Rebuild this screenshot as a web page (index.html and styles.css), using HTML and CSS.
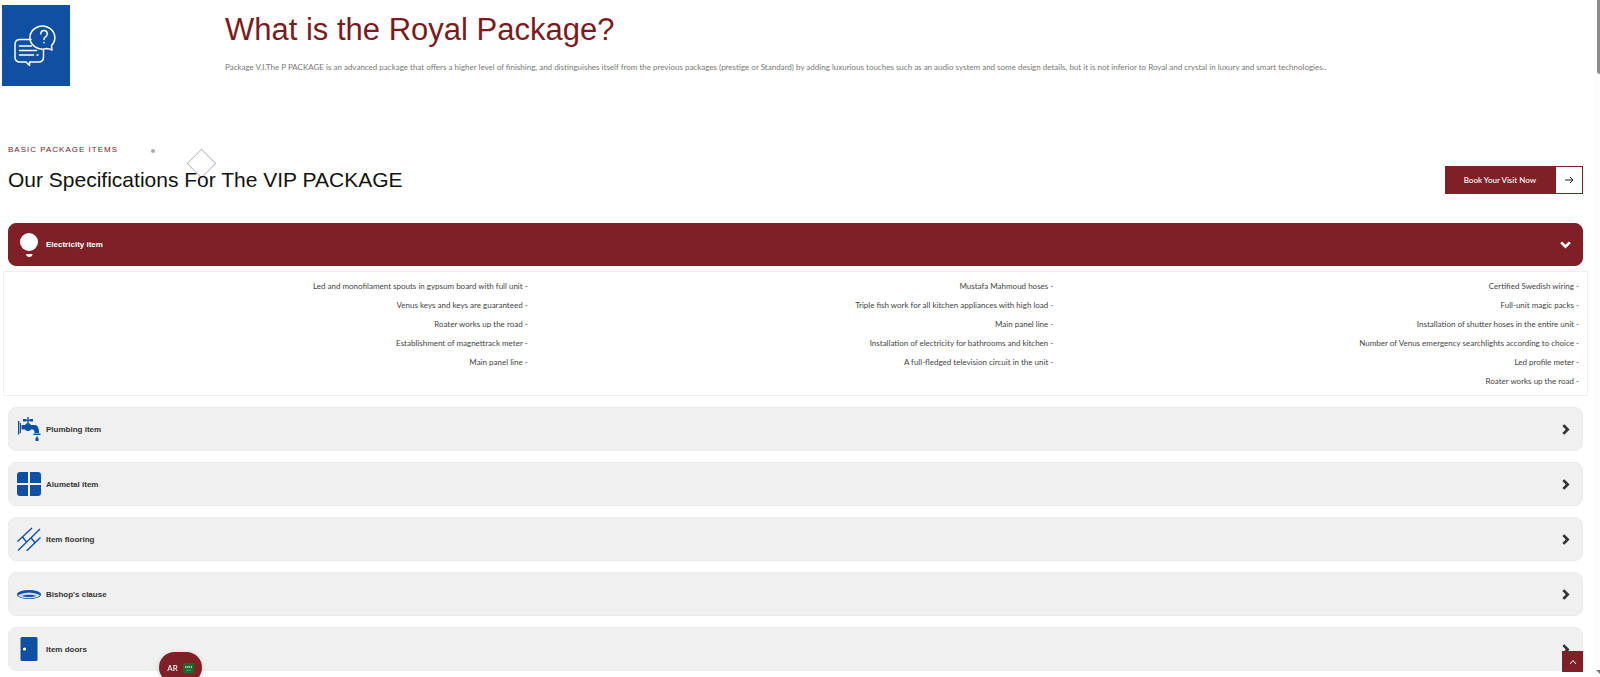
FILE: index.html
```html
<!DOCTYPE html>
<html lang="en">
<head>
    <meta charset="UTF-8">
    <meta name="viewport" content="width=device-width, initial-scale=1.0">
    <title>VIP Package</title>
    <link rel="stylesheet" href="styles.css">
</head>
<body>
    <main class="page">
        <section class="intro">
            <div class="intro-image">
                <svg viewBox="0 0 68 81" fill="none" stroke="#fff" stroke-width="1.5" stroke-linecap="round" stroke-linejoin="round">
                    <path d="M29 34.500H18q-5 0-5 5v12.500q0 5 5 5h6l3.500 3.500V57h9q5 0 5-5v-6.500"/>
                    <path d="M17.500 41h12M17.500 45.500h17M17.500 50h14M35 50h1"/>
                    <path d="M50 45l-.5-4.500a12.500 11.500 0 1 0-5 3q2.500 0 5.500 1.500z"/>
                    <path d="M38.800 29q0-3.500 3.200-3.500t3.200 3.200q0 2-1.700 3.100t-1.500 2.700M42 37.500v.2"/>
                </svg>
            </div>
            <div class="intro-text">
                <h1>What is the Royal Package?</h1>
                <p>Package V.I.The P PACKAGE is an advanced package that offers a higher level of finishing, and distinguishes itself from the previous packages (prestige or Standard) by adding luxurious touches such as an audio system and some design details, but it is not inferior to Royal and crystal in luxury and smart technologies..</p>
            </div>
        </section>

        <section class="specs-header">
            <div class="specs-title">
                <p class="eyebrow">BASIC PACKAGE ITEMS</p>
                <h2>Our Specifications For The VIP PACKAGE</h2>
                <span class="dot"></span>
                <span class="diamond"></span>
            </div>
            <a class="book-btn" href="#book">
                <span class="book-label">Book Your Visit Now</span>
                <span class="book-arrow">
                    <svg width="10" height="10" viewBox="0 0 10 10" fill="none" stroke="#222" stroke-width="1"><path d="M1 5h8M6 2l3 3-3 3"/></svg>
                </span>
            </a>
        </section>

        <section class="accordion">
            <button class="item active" type="button" aria-expanded="true">
                <svg class="icon" viewBox="0 0 24 24" fill="#fff"><ellipse cx="12" cy="9" rx="9" ry="9"/><path d="M9 21h6.500q-.3 3-3.200 3T9 21z"/></svg>
                <span>Electricity item</span>
                <svg class="arrow" viewBox="0 0 12 12"><path d="M2 4l4 4 4-4"/></svg>
            </button>
            <div class="panel">
                <ul>
                    <li>Led and monofilament spouts in gypsum board with full unit -</li>
                    <li>Venus keys and keys are guaranteed -</li>
                    <li>Roater works up the road -</li>
                    <li>Establishment of magnettrack meter -</li>
                    <li>Main panel line -</li>
                </ul>
                <ul>
                    <li>Mustafa Mahmoud hoses -</li>
                    <li>Triple fish work for all kitchen appliances with high load -</li>
                    <li>Main panel line -</li>
                    <li>Installation of electricity for bathrooms and kitchen -</li>
                    <li>A full-fledged television circuit in the unit -</li>
                </ul>
                <ul>
                    <li>Certified Swedish wiring -</li>
                    <li>Full-unit magic packs -</li>
                    <li>Installation of shutter hoses in the entire unit -</li>
                    <li>Number of Venus emergency searchlights according to choice -</li>
                    <li>Led profile meter -</li>
                    <li>Roater works up the road -</li>
                </ul>
            </div>

            <button class="item" type="button" aria-expanded="false">
                <svg class="icon" viewBox="0 0 24 24" fill="#1050a2"><path d="M1 4h1.400v13.500H1zM3 6h1v10H3zM4.500 8h3.500q1-2 3-2t3 2h4q4 0 4 8h-4.500q0-3.500-2-3.500H14Q13 14 11 14t-3-1.500H4.500zM10.300 0h1.400v6h-1.400zM6 2h3.500v.7h3V2H16v2.400h-3.500v-.7h-3v.7H6zM16.500 16.500h7V18h-7zM20 19q-3.500 5 0 5.300 3.500-.3 0-5.300z"/></svg>
                <span>Plumbing item</span>
                <svg class="arrow" viewBox="0 0 12 12"><path d="M4 2l4 4-4 4"/></svg>
            </button>
            <button class="item" type="button" aria-expanded="false">
                <svg class="icon" viewBox="0 0 24 24" fill="#1050a2"><path d="M3 0h8v11H0V3q0-3 3-3zM13 0h8q3 0 3 3v8H13zM0 13h11v11H3q-3 0-3-3zM13 13h11v8q0 3-3 3h-8z"/></svg>
                <span>Alumetal item</span>
                <svg class="arrow" viewBox="0 0 12 12"><path d="M4 2l4 4-4 4"/></svg>
            </button>
            <button class="item" type="button" aria-expanded="false">
                <svg class="icon" viewBox="0 0 24 24" fill="none" stroke="#1050a2" stroke-width="1.400"><path d="M.5 14.500L15 1M1 23.500L23 2M9.500 24L23.500 10.500M5.500 10l4 5M14 10.800l4 5"/></svg>
                <span>Item flooring</span>
                <svg class="arrow" viewBox="0 0 12 12"><path d="M4 2l4 4-4 4"/></svg>
            </button>
            <button class="item" type="button" aria-expanded="false">
                <svg class="icon" viewBox="0 0 24 24"><ellipse cx="12" cy="12.500" rx="12" ry="4.500" fill="#1050a2"/><path d="M1 13q11-5 22 0-2 3.300-11 3.300T1 13z" fill="#d5e0ee"/><path d="M4.500 14q7.500-2.500 15 0-7.500 2-15 0z" fill="#1050a2"/></svg>
                <span>Bishop's clause</span>
                <svg class="arrow" viewBox="0 0 12 12"><path d="M4 2l4 4-4 4"/></svg>
            </button>
            <button class="item" type="button" aria-expanded="false">
                <svg class="icon" viewBox="0 0 24 24"><rect x="3.500" width="17" height="24" rx="1.500" fill="#1050a2"/><circle cx="7.500" cy="12" r="1.600" fill="#fff"/></svg>
                <span>Item doors</span>
                <svg class="arrow" viewBox="0 0 12 12"><path d="M4 2l4 4-4 4"/></svg>
            </button>
        </section>
    </main>

    <a class="lang" href="#ar">
        AR
        <svg width="11" height="10" viewBox="0 0 11 10"><rect width="11" height="10" rx="1" fill="#16692f"/><path d="M2 3.500h7M2 4.500h7" stroke="#b9d5c0" stroke-dasharray="1.500 .4" stroke-width=".8"/><path d="M3 7.300h5" stroke="#8ab896" stroke-width=".6"/></svg>
    </a>
    <button class="to-top" type="button" aria-label="Back to top">
        <svg width="8" height="6" viewBox="0 0 8 6" fill="none" stroke="#fff" stroke-width="1"><path d="M1 5l3-3.500L7 5"/></svg>
    </button>
    <div class="scroll-track"><div class="scroll-thumb"></div><div class="scroll-down"></div></div>
</body>
</html>
```
FILE: styles.css
```css
* {
    margin: 0;
    padding: 0;
    box-sizing: border-box;
}

body {
    font-family: Lato, "Noto Sans", sans-serif;
    font-size: 8px;
    background: #fff;
    color: #222;
}

.page {
    padding: 5px 17px 0 8px;
}

.intro {
    display: flex;
    gap: 155px;
    margin-left: -6px;
}

.intro-image {
    flex: none;
    width: 68px;
    height: 81px;
    background: #1050a2;
}

.intro-image svg {
    display: block;
}

.intro-text {
    padding-top: 6px;
}

.intro-text h1 {
    font-family: "Liberation Sans", Arial, sans-serif;
    font-size: 31px;
    line-height: 38px;
    font-weight: 400;
    color: #7b1b20;
}

.intro-text p {
    margin-top: 12px;
    line-height: 12px;
    color: #777;
}

.specs-header {
    display: flex;
    justify-content: space-between;
    align-items: flex-end;
    margin-top: 57px;
}

.specs-title {
    position: relative;
    font-family: "Liberation Sans", Arial, sans-serif;
}

.eyebrow {
    font-size: 8px;
    line-height: 14px;
    letter-spacing: 1px;
    color: #7f2027;
}

.specs-title h2 {
    margin-top: 9px;
    font-size: 21px;
    line-height: 28px;
    font-weight: 400;
    color: #111;
}

.dot {
    position: absolute;
    top: 6px;
    left: 143px;
    width: 4px;
    height: 4px;
    border-radius: 50%;
    background: #aaa;
}

.diamond {
    position: absolute;
    top: 10px;
    left: 183px;
    width: 21px;
    height: 21px;
    border: 1px solid #bbb;
    transform: rotate(45deg);
    z-index: -1;
}

.book-btn {
    display: flex;
    height: 28px;
    border: 1px solid #7f2027;
    text-decoration: none;
    color: #fff;
    font-weight: 500;
}

.book-label {
    display: flex;
    align-items: center;
    padding: 0 20px 0 18px;
    background: #7f2027;
}

.book-arrow {
    display: flex;
    align-items: center;
    justify-content: center;
    width: 26px;
}

.accordion {
    margin-top: 29px;
}

.item {
    display: flex;
    align-items: center;
    gap: 5px;
    width: 100%;
    height: 44px;
    margin-bottom: 11px;
    padding: 0 10px 0 8px;
    border: 1px solid #ececec;
    border-radius: 8px;
    background: #f0f0f0;
    color: #333;
    font-family: "Liberation Sans", Arial, sans-serif;
    font-size: 8px;
    font-weight: 700;
    text-align: left;
    cursor: pointer;
}

.item.active {
    height: 43px;
    margin-bottom: 5px;
    border-color: #7f2027;
    background: #7f2027;
    color: #fff;
}

.icon {
    flex: none;
    width: 24px;
    height: 24px;
}

.arrow {
    width: 13px;
    height: 13px;
    margin-left: auto;
    fill: none;
    stroke: currentColor;
    stroke-width: 2.5;
}

.panel {
    display: grid;
    grid-template-columns: repeat(3, 1fr);
    margin: 0 -5px 11px;
    padding: 5px 6px 4px 0;
    border: 1px solid #eee;
}

.panel ul {
    padding-right: 2px;
    list-style: none;
    text-align: right;
}

.panel li {
    line-height: 19px;
    color: #444;
}

.lang {
    position: fixed;
    left: 159px;
    bottom: -6px;
    display: flex;
    align-items: center;
    justify-content: center;
    gap: 5px;
    width: 43px;
    height: 31px;
    border-radius: 16px;
    background: #7f2027;
    box-shadow: 0 2px 6px rgba(0, 0, 0, 0.15);
    color: #fff;
    font-weight: 500;
    text-decoration: none;
}

.to-top {
    position: fixed;
    right: 17px;
    bottom: 5px;
    display: flex;
    align-items: center;
    justify-content: center;
    width: 21px;
    height: 21px;
    border: none;
    background: #7f2027;
    cursor: pointer;
}

.scroll-track {
    position: fixed;
    top: 0;
    right: 0;
    bottom: 0;
    width: 7px;
    background: #fcfcfc;
}

.scroll-thumb {
    width: 3px;
    height: 74px;
    margin-left: auto;
    border-radius: 0 0 0 3px;
    background: #8b8b8b;
}

.scroll-down {
    position: absolute;
    right: 0;
    bottom: 3px;
    border-top: 4px solid #777;
    border-left: 4px solid transparent;
}
```
